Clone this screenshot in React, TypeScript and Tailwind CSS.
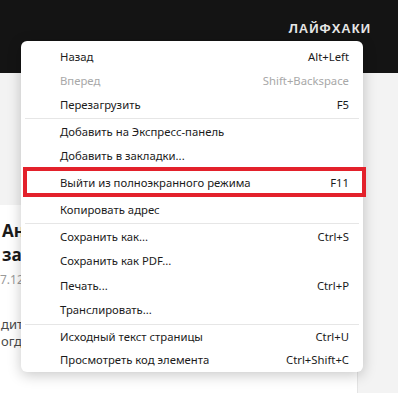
import React from 'react';

type MenuItem =
    | { kind: 'item'; label: string; shortcut?: string; disabled?: boolean; highlighted?: boolean; h: string }
    | { kind: 'sep'; m: string };

const items: MenuItem[] = [
    { kind: 'item', label: 'Назад', shortcut: 'Alt+Left', h: 'h-[24px]' },
    { kind: 'item', label: 'Вперед', shortcut: 'Shift+Backspace', disabled: true, h: 'h-[24px]' },
    { kind: 'item', label: 'Перезагрузить', shortcut: 'F5', h: 'h-[24px]' },
    { kind: 'sep', m: 'my-[1px]' },
    { kind: 'item', label: 'Добавить на Экспресс-панель', h: 'h-[24px]' },
    { kind: 'item', label: 'Добавить в закладки...', h: 'h-[24px]' },
    { kind: 'item', label: 'Выйти из полноэкранного режима', shortcut: 'F11', highlighted: true, h: 'h-[30px]' },
    { kind: 'item', label: 'Копировать адрес', h: 'h-[24px]' },
    { kind: 'sep', m: 'my-[1px]' },
    { kind: 'item', label: 'Сохранить как...', shortcut: 'Ctrl+S', h: 'h-[24.5px]' },
    { kind: 'item', label: 'Сохранить как PDF...', h: 'h-[24.5px]' },
    { kind: 'item', label: 'Печать...', shortcut: 'Ctrl+P', h: 'h-[24.5px]' },
    { kind: 'item', label: 'Транслировать...', h: 'h-[24.5px]' },
    { kind: 'sep', m: 'my-[1px]' },
    { kind: 'item', label: 'Исходный текст страницы', shortcut: 'Ctrl+U', h: 'h-[23px]' },
    { kind: 'item', label: 'Просмотреть код элемента', shortcut: 'Ctrl+Shift+C', h: 'h-[23px]' },
];

const ContextMenu: React.FC = () => {
    return (
        <div className="absolute left-[21px] top-[41px] w-[342px] rounded-[6px] bg-white pt-[4px] shadow-[0_3px_14px_rgba(0,0,0,0.22)]">
            {items.map((item, i) => {
                if (item.kind === 'sep') {
                    return <div key={i} className={`mx-[4px] h-px bg-[#e6e6e6] ${item.m}`} />;
                }
                return (
                    <div
                        key={i}
                        className={`relative flex items-center justify-between pl-[39px] pr-[14px] text-[11.3px] ${item.h} ${
                            item.disabled ? 'text-[#a8a8a8]' : 'text-[#1b1b1b]'
                        }`}
                    >
                        <span>{item.label}</span>
                        {item.shortcut && <span>{item.shortcut}</span>}
                        {/* red annotation frame */}
                        {item.highlighted && (
                            <span className="pointer-events-none absolute left-[2px] right-[-3px] top-[-1px] bottom-[1px] border-4 border-[#e3212b]" />
                        )}
                    </div>
                );
            })}
        </div>
    );
};

export default function App() {
    return (
        <div className="relative h-[393px] w-[398px] overflow-hidden bg-[#f3f3f3] font-['Noto_Sans',sans-serif]">
            {/* Site header */}
            <div className="flex h-[73px] justify-end bg-[#141414] pr-[27px] pt-[21px]">
                <span className="font-['Liberation_Sans',sans-serif] text-[13px] font-bold leading-[16px] tracking-[1px] text-[#e6e6e6]">
                    ЛАЙФХАКИ
                </span>
            </div>

            {/* Article card behind the menu, only its left edge shows */}
            <div className="mt-[132px] h-[200px] w-[358px] border-r border-[#e4e4e4] bg-white pt-[14px]">
                <div className="w-[21px] overflow-hidden whitespace-nowrap">
                    <div className="pl-[2px] font-['Open_Sans',sans-serif] text-[17px] font-bold leading-[24px] text-[#1a1a1a]">
                        <div>Андроид</div>
                        <div>задачи</div>
                    </div>
                    <div className="mt-[4px] text-[12px] leading-[18px] text-[#9a9a9a]">7.12.2023</div>
                    <div className="mt-[27px] pl-[1px] text-[13px] leading-[17px] text-[#4a4a4a]">
                        <div>дите</div>
                        <div>огда</div>
                    </div>
                </div>
            </div>

            <ContextMenu />
        </div>
    );
}
